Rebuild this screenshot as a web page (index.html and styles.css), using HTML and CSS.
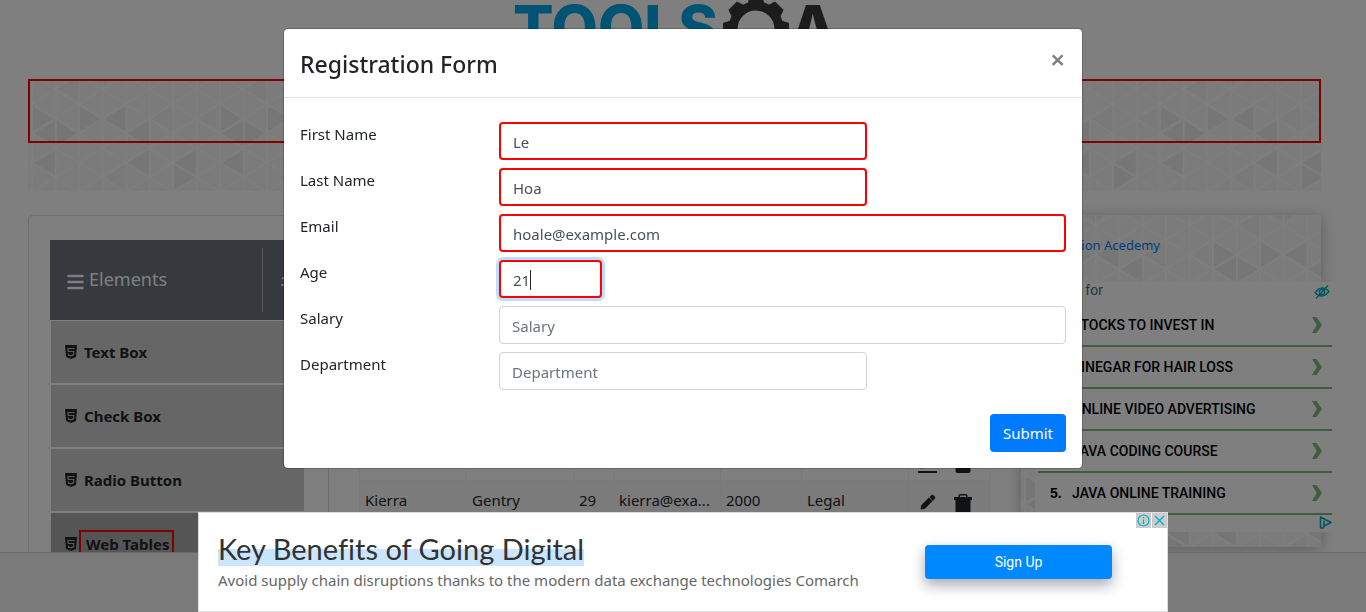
FILE: index.html
```
<!DOCTYPE html>
<html lang="en">
<head>
<meta charset="utf-8">
<title>Web Tables - Registration Form</title>
<link rel="stylesheet" href="styles.css">
</head>
<body>
<svg class="defs" aria-hidden="true">
  <defs>
    <pattern id="triangles" patternUnits="userSpaceOnUse" x="0" y="0" width="564" height="352" patternTransform="translate(0 -5) scale(.3333)">
      <rect x="0" y="0" width="564" height="354" fill="#f7f7f7"/>
      <g transform="translate(-84 -48)" fill="#ededed">
        <path d="M100 226L166 190V262ZM170 190V262L236 227ZM240 145V220L305 182ZM310 182L378 145V220ZM380 226L447 190V262Z"/>
        <path d="M100 315L166 278V350ZM380 315L447 278V350ZM520 315L588 278V350ZM522 322V393L588 358ZM97 145V220L160 182ZM270 60L310 82L340 60Z"/>
        <path d="M312 358L378 322V393ZM170 92L236 58V128ZM450 182L518 145V220ZM592 180L660 145V220Z" fill="#f2f2f2"/>
      </g>
      <g stroke="#fdfdfd" stroke-width="5" fill="none">
        <path d="M12 0V354M83 0V354M153 0V354M224 0V354M295 0V354M365 0V354M435 0V354M506 0V354"/>
        <path d="M0 -269l564 352M0 -181l564 352M0 -93l564 352M0 -5l564 352M0 83l564 352M0 171l564 352M0 259l564 352M0 347l564 352"/>
        <path d="M0 9l564 -352M0 97l564 -352M0 185l564 -352M0 273l564 -352M0 361l564 -352M0 449l564 -352M0 537l564 -352M0 625l564 -352"/>
      </g>
    </pattern>
    <symbol id="html5" viewBox="0 0 12 14">
      <path fill="#212529" d="M0 0H12L11 12L6 14L1 12Z"/>
      <path fill="none" stroke="#bbb" stroke-width="1.200" d="M9.500 3.500H3L3.300 6.500H8.800L8.400 10L6 10.800L3.600 10V8.800"/>
    </symbol>
    <symbol id="edit" viewBox="0 0 20 20">
      <path fill="#212529" d="M1 18H20V20H1ZM3.500 15.500L4.200 11.200L12 3.400L15.700 7L7.900 14.800ZM12.300 3.100L14.500 1Q15.400 .4 16.200 1L18 2.800Q18.600 3.600 18 4.500L16 6.700Z"/>
    </symbol>
    <symbol id="trash" viewBox="0 0 18 20">
      <path fill="#212529" fill-rule="evenodd" d="M0 3H4.500V1.500Q4.500 0 6 0H12Q13.500 0 13.500 1.500V3H18V6H16.500V18Q16.500 20 14.500 20H3.500Q1.500 20 1.500 18V6H0ZM6 1.500V3H12V1.500Z"/>
    </symbol>
    <symbol id="chevron" viewBox="0 0 10 16">
      <path fill="#84b884" d="M0 0H4.500L10 8L4.500 16H0L4.800 8Z"/>
    </symbol>
  </defs>
</svg>

<div class="page">
  <header class="site-header">
    <span class="logo-tools">TOOLS</span>
    <svg class="gear" viewBox="-34 -34 68 68" aria-hidden="true">
      <g fill="#383838">
        <path id="tooth" d="M-9 -24L-6 -33H6L9 -24Z"/>
        <use href="#tooth" transform="rotate(45)"/><use href="#tooth" transform="rotate(90)"/>
        <use href="#tooth" transform="rotate(135)"/><use href="#tooth" transform="rotate(180)"/>
        <use href="#tooth" transform="rotate(225)"/><use href="#tooth" transform="rotate(270)"/>
        <use href="#tooth" transform="rotate(315)"/>
      </g>
      <circle r="23" fill="none" stroke="#383838" stroke-width="9"/>
    </svg>
    <span class="logo-a">A</span>
  </header>

  <div class="banner">
    <svg class="fill" aria-hidden="true"><rect width="100%" height="100%" fill="url(#triangles)"/></svg>
    <div class="banner-mark"></div>
  </div>

  <div class="columns">
    <nav class="sidebar">
      <div class="group">
        <svg class="bars" viewBox="0 0 17 16" aria-hidden="true"><path stroke="#fff" stroke-width="2.500" stroke-linecap="round" d="M1.500 2H15.500M1.500 8H15.500M1.500 14H15.500"/></svg>
        <span class="group-name">Elements</span>
        <span class="group-toggle"><svg viewBox="0 0 14 12" aria-hidden="true"><path fill="none" stroke="#fff" stroke-width="1.500" d="M1 11H13M2 5L7 1L12 5"/></svg></span>
      </div>
      <a class="item" href="#"><svg class="h5"><use href="#html5"/></svg><span>Text Box</span></a>
      <a class="item" href="#"><svg class="h5"><use href="#html5"/></svg><span>Check Box</span></a>
      <a class="item" href="#"><svg class="h5"><use href="#html5"/></svg><span>Radio Button</span></a>
      <a class="item active" href="#"><svg class="h5"><use href="#html5"/></svg><span class="marked">Web Tables</span></a>
    </nav>

    <main class="content">
      <table class="records">
        <colgroup><col class="c17"><col class="c17"><col class="c6"><col class="c17"><col class="c13"><col class="c17"><col class="c13"></colgroup>
        <tbody>
          <tr><td></td><td></td><td></td><td></td><td></td><td></td><td class="actions"><svg><use href="#edit"/></svg><svg><use href="#trash"/></svg></td></tr>
          <tr class="alt"><td>Kierra</td><td>Gentry</td><td>29</td><td>kierra@exa...</td><td>2000</td><td>Legal</td><td class="actions"><svg><use href="#edit"/></svg><svg><use href="#trash"/></svg></td></tr>
        </tbody>
      </table>
    </main>

    <aside class="right">
      <svg class="fill" aria-hidden="true"><rect width="100%" height="100%" fill="url(#triangles)"/></svg>
      <div class="right-body">
        <a class="academy" href="#">Automation Acedemy</a>
        <div class="search-ad">
          <div class="search-head"><span><b>Search</b> for</span>
            <svg class="eye" viewBox="0 0 16 14" aria-hidden="true"><g fill="none" stroke="#00a9c9" stroke-width="1.300"><path d="M1 7.500Q8 -1 15 6.500Q8 15 1 7.500Z"/><circle cx="8" cy="7" r="2.600"/><path d="M2 13.500L14 .5"/></g></svg>
          </div>
          <ol>
            <li><b>1.</b><a href="#">STOCKS TO INVEST IN</a><svg><use href="#chevron"/></svg></li>
            <li><b>2.</b><a href="#">VINEGAR FOR HAIR LOSS</a><svg><use href="#chevron"/></svg></li>
            <li><b>3.</b><a href="#">ONLINE VIDEO ADVERTISING</a><svg><use href="#chevron"/></svg></li>
            <li><b>4.</b><a href="#">JAVA CODING COURSE</a><svg><use href="#chevron"/></svg></li>
            <li><b>5.</b><a href="#">JAVA ONLINE TRAINING</a><svg><use href="#chevron"/></svg></li>
          </ol>
          <svg class="adchoice" viewBox="0 0 13 13" aria-hidden="true"><path fill="none" stroke="#00a9c9" stroke-width="1.500" stroke-linejoin="round" d="M4.500 10.500V12H1.500V1L12 6.500L5 10V4.500"/></svg>
        </div>
      </div>
    </aside>
  </div>
</div>

<footer class="bottom-bar"></footer>
<div class="backdrop"></div>

<div class="dialog-wrap">
  <section class="dialog" role="dialog" aria-labelledby="dialog-title">
    <div class="dialog-head">
      <h1 id="dialog-title">Registration Form</h1>
      <button class="close" type="button" aria-label="Close">×</button>
    </div>
    <form class="dialog-body">
      <div class="row"><label for="first">First Name</label><div class="half"><input class="marked-input" id="first" type="text" value="Le"></div></div>
      <div class="row"><label for="last">Last Name</label><div class="half"><input class="marked-input" id="last" type="text" value="Hoa"></div></div>
      <div class="row"><label for="email">Email</label><div class="wide"><input class="marked-input" id="email" type="text" value="hoale@example.com"></div></div>
      <div class="row"><label for="age">Age</label><div class="small"><div class="caret-box"><input class="marked-input focused" id="age" type="text" value="21"><span class="caret"></span></div></div></div>
      <div class="row"><label for="salary">Salary</label><div class="wide"><input id="salary" type="text" placeholder="Salary"></div></div>
      <div class="row"><label for="dept">Department</label><div class="half"><input id="dept" type="text" placeholder="Department"></div></div>
      <div class="submit-row"><button class="submit" type="button">Submit</button></div>
    </form>
  </section>
</div>

<div class="ad-wrap">
  <section class="ad">
    <div class="ad-copy">
      <h2><span>Key Benefits of Going Digital</span></h2>
      <p>Avoid supply chain disruptions thanks to the modern data exchange technologies Comarch</p>
    </div>
    <button class="signup" type="button">Sign Up</button>
    <div class="ad-controls">
      <button type="button" aria-label="Ad info"><svg viewBox="0 0 15 15"><g fill="none" stroke="#00aecd" stroke-width="1.200"><circle cx="7.500" cy="7.500" r="5.500"/><path d="M7.500 6.500V11M7.500 4V5.300"/></g></svg></button>
      <button type="button" aria-label="Close ad"><svg viewBox="0 0 15 15"><path stroke="#00aecd" stroke-width="1.400" d="M3 3L12 12M12 3L3 12"/></svg></button>
    </div>
  </section>
</div>
</body>
</html>
```
FILE: styles.css
```
* { box-sizing: border-box; }
html { height: 100%; }
body {
  height: 100%;
  margin: 0;
  overflow: hidden;
  background: #fff;
  color: #212529;
  font: 15px/24px "Noto Sans", "Open Sans", sans-serif;
}
svg { display: block; }
button, input { font: inherit; margin: 0; }
.defs { position: absolute; width: 0; height: 0; }
.page { padding: 0 45px 0 28px; }

.site-header {
  display: flex;
  justify-content: center;
  align-items: flex-start;
  height: 79px;
  font: 800 60px/54px Inter, sans-serif;
}
.logo-tools { color: #00a8e6; }
.gear { width: 68px; height: 68px; margin: -5px 0 0 4px; }
.logo-a { color: #383838; }

.fill { position: absolute; inset: 0; width: 100%; height: 100%; }
.banner { position: relative; height: 112px; margin-bottom: 24px; }
.banner-mark { position: relative; height: 64px; border: 2px solid #f00; }

.columns { display: grid; grid-template-columns: 301px 1fr 300px; }
.sidebar {
  padding: 24px 23px 24px 21px;
  border: 1px solid #dcdcdc;
  border-radius: 4px;
}
.group {
  display: flex;
  align-items: center;
  height: 80px;
  padding: 8px 0 8px 17px;
  background: #6c757d;
  color: #fff;
}
.bars { width: 17px; height: 16px; margin-top: 4px; }
.group-name { flex: 1; margin: 0 0 2px 5px; font-size: 18px; }
.group-toggle {
  display: flex;
  align-items: center;
  width: 43px;
  height: 64px;
  padding-left: 17px;
  border-left: 1px solid #adb5bd;
}
.group-toggle svg { width: 14px; height: 12px; }
.item {
  display: flex;
  align-items: center;
  gap: 7px;
  height: 62px;
  margin: 1px 1px 2px;
  padding-left: 14px;
  background: #ccc;
  color: #212529;
  font-weight: 700;
  text-decoration: none;
}
.item + .item { margin-top: 0; }
.active { background: #aaa; }
.h5 { width: 12px; height: 14px; }
.active .h5 { margin-right: -5px; }
.marked { padding: 0 3px 0 5px; border: 2px solid #f00; }

.content { min-width: 0; padding: 224px 31px 0 30px; }
.records { width: 100%; table-layout: fixed; border-collapse: collapse; border: 1px solid #e3e3e3; }
.records td { height: 41px; padding: 0 5px 2px; border: 1px solid #f2f2f2; white-space: nowrap; }
.alt { background: #f6f6f6; }
.c17 { width: 107px; }
.c6 { width: 40px; }
.c13 { width: 81px; }
.records .actions svg { display: inline-block; width: 20px; height: 20px; margin: 3px 8px 0; vertical-align: middle; }
.records .actions { padding: 0; }

.right { position: relative; height: 332px; box-shadow: 0 2px 14px #bbb; }
.right-body { position: relative; padding-top: 18px; }
.academy { display: block; width: 139px; margin-bottom: 25px; color: #007bff; font-size: 13px; text-align: right; text-decoration: none; white-space: nowrap; }
.search-ad { margin: 0 -13px 0 14px; height: 250px; padding: 0 2px 0 3px; background: #fff; }
.search-head {
  display: flex;
  justify-content: space-between;
  align-items: flex-start;
  height: 23px;
  padding-right: 2px;
  color: #666;
  font: 14px/16px Roboto, sans-serif;
}
.search-head b { color: #4778b8; }
.eye { width: 16px; height: 14px; margin-top: 3px; }
.search-ad ol { margin: 0; padding: 0; list-style: none; }
.search-ad li {
  display: flex;
  align-items: center;
  height: 42px;
  padding: 0 10px 0 12px;
  border-bottom: 2px solid #80b880;
  color: #000;
  font: 700 14px/16px "Liberation Sans", sans-serif;
}
.search-ad li b { width: 22px; }
.search-ad li a { flex: 1; color: #000; font: 500 14px/16px Roboto, sans-serif; text-decoration: none; }
.search-ad li svg { width: 10px; height: 16px; }
.adchoice { width: 13px; height: 13px; margin: 1px 0 0 auto; }

.bottom-bar { position: fixed; right: 0; bottom: 0; left: 0; height: 60px; background: #f5f5f5; border-top: 1px solid #cfcfcf; }
.backdrop { position: fixed; inset: 0; background: rgba(0, 0, 0, .5); }

.dialog-wrap { position: fixed; inset: 0; display: flex; justify-content: center; align-items: flex-start; padding-top: 28px; }
.dialog { width: 100%; max-width: 800px; background: #fff; background-clip: padding-box; border: 1px solid rgba(0, 0, 0, .2); border-radius: 5px; }
.dialog-head { display: flex; justify-content: space-between; align-items: flex-start; padding: 17px 16px 15px; border-bottom: 1px solid #dee2e6; }
.dialog-head h1 { margin: 0; font-size: 23px; line-height: 36px; font-weight: 500; }
.close { padding: 0 1px; border: 0; background: none; color: #7f7f7f; font-size: 26px; line-height: 26px; font-weight: 600; }
.dialog-body { padding: 16px; }
.row { display: flex; margin: 8px -15px 0; }
.row label { width: 25%; padding: 0 15px; }
.row > div { padding: 0 15px; }
.half { width: 50%; }
.wide { width: 75%; }
.small { width: 16.667%; }
.row input {
  display: block;
  width: 100%;
  height: 38px;
  padding: 4px 12px 2px;
  border: 1px solid #ced4da;
  border-radius: 4px;
  outline: 0;
  background: #fff;
  color: #495057;
}
.row input::placeholder { color: #6c757d; opacity: 1; }
.row .marked-input { border: 2px solid #f00; }
.row .focused { box-shadow: 0 0 0 3px #bfdeff; }
.caret-box { position: relative; }
.caret { position: absolute; top: 10px; left: 31px; width: 1px; height: 20px; background: #212529; }
.submit-row { display: flex; justify-content: flex-end; margin-top: 24px; }
.submit { height: 38px; padding: 0 13px; border: 0; border-radius: 4px; background: #007bff; color: #fff; }

.ad-wrap { position: fixed; right: 0; bottom: 0; left: 0; display: flex; justify-content: center; }
.ad {
  position: relative;
  display: flex;
  align-items: center;
  justify-content: space-between;
  width: 100%;
  max-width: 970px;
  height: 100px;
  padding: 0 55px 0 19px;
  border: 1px solid #ddd;
  background: #fff;
}
.ad h2 { margin: 0; color: #303336; font: 400 29px/34px Lato, sans-serif; font-variant-ligatures: none; }
.ad h2 span { background: linear-gradient(transparent 50%, #cce5ff 50%); }
.ad p { margin: 2px 0 0; color: #666; font: 400 15px/24px "Noto Sans", sans-serif; }
.signup {
  width: 187px;
  height: 34px;
  border: 0;
  border-radius: 4px;
  background: #08f;
  color: #fff;
  font: 14px/20px Roboto, sans-serif;
  box-shadow: 0 6px 14px rgba(30, 40, 70, .4);
}
.ad-controls { position: absolute; top: 0; right: 0; display: flex; gap: 1px; }
.ad-controls button { width: 15px; height: 15px; padding: 0; border: 0; background: #ccc; }
```
